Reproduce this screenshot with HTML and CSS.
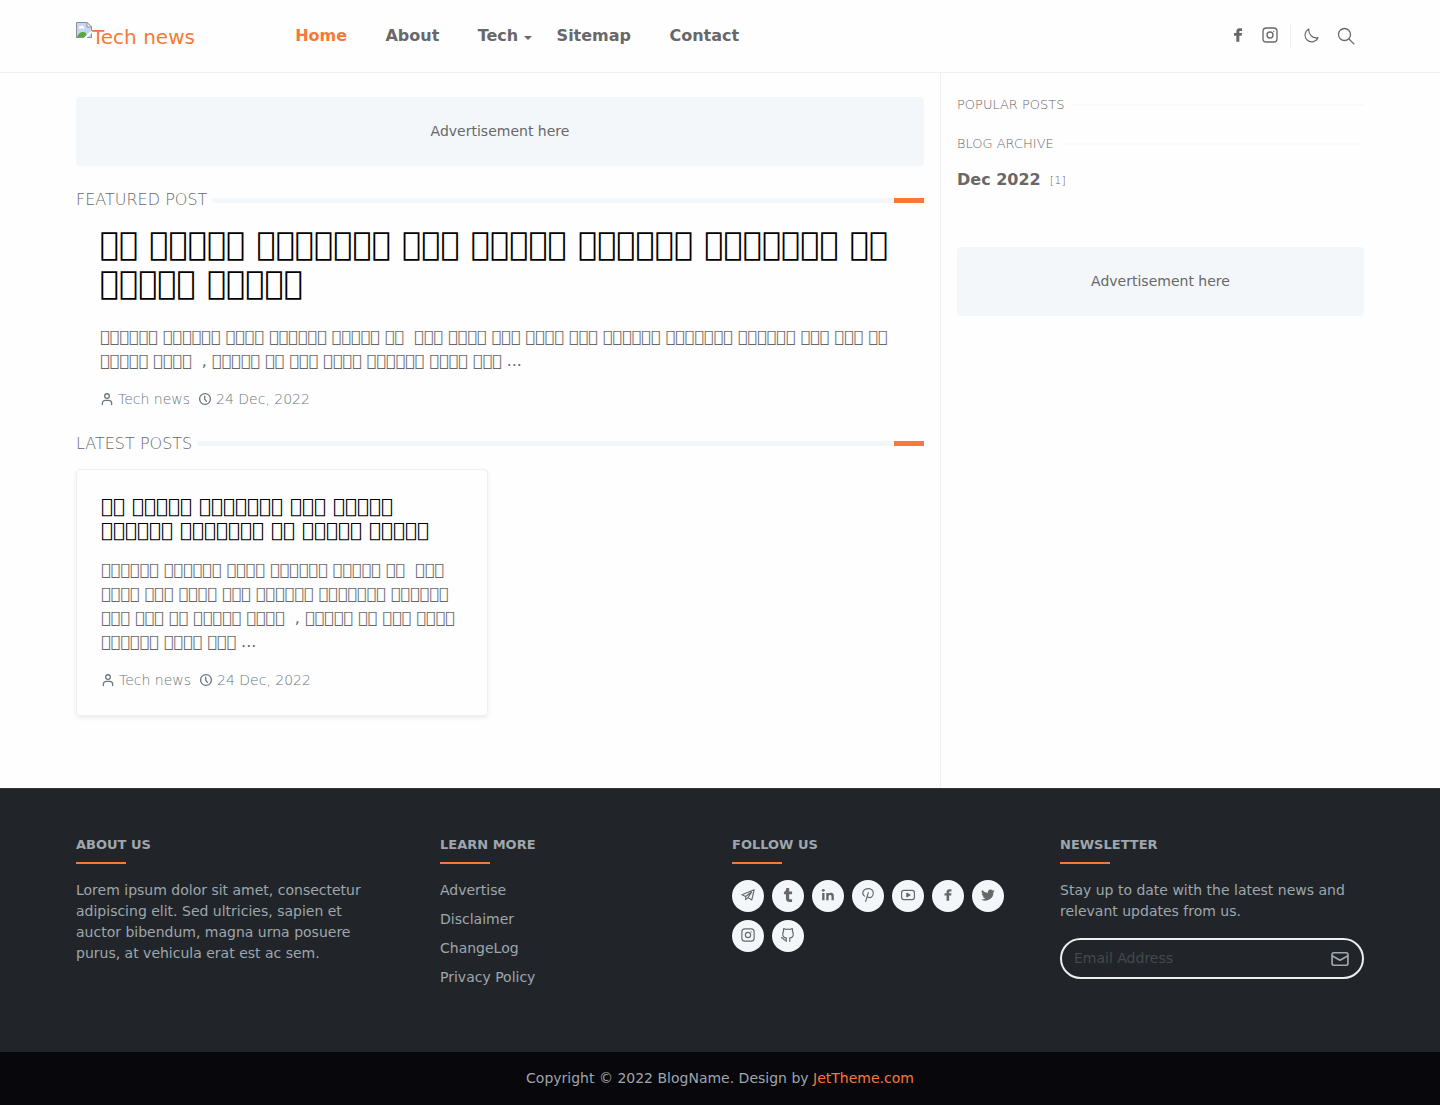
FILE: index.html
```html
<!DOCTYPE html>
<html lang="en">
<head>
<meta charset="utf-8">
<title>Tech news</title>
<link rel="stylesheet" href="styles.css">
</head>
<body>
<svg class="sprite" aria-hidden="true">
  <symbol id="user" viewBox="0 0 24 24"><circle cx="12" cy="7" r="4"/><path d="M4 21.500v-2a5 5 0 0 1 5-5h6a5 5 0 0 1 5 5v2"/></symbol>
  <symbol id="clock" viewBox="0 0 24 24"><circle cx="12" cy="12" r="9.300"/><path d="M11.500 7v5.500l3 3.500"/></symbol>
  <symbol id="instagram" viewBox="0 0 24 24"><rect x="1.500" y="1.500" width="21" height="21" rx="5"/><circle cx="12" cy="12" r="4.500"/><path d="M17.500 6.500h.01"/></symbol>
  <symbol id="facebook" viewBox="0 0 24 24"><path d="M9.500 22v-9H6V9h3.500V7c0-3.200 1.700-5 4.700-5H18v4h-2.400c-1.200 0-1.600.5-1.600 1.500V9h4l-.6 4H14v9z"/></symbol>
</svg>

<header class="header">
  <div class="container header-row">
    <a class="logo">
      <svg class="logo-img" viewBox="0 0 16 16"><path d="M.5 15.500V.5h10.500l4.500 4.500v10.500z" fill="#c6d5f5"/><path d="M3 6.500c-1-2 1-2.500 1.500-2 .5-1.500 3-1.500 3 .5 1.500 0 1.500 1.500.5 1.500z" fill="#fff"/><path d="M1 15.500c1-5 6-7 9-4.500l1 4.500z" fill="#55ab38"/><path d="M.5 16V.5H11l4.500 4.500v11M.5 15.500H15" fill="none" stroke="#8f8f8f"/><path d="M11 .5V5h4.500z" fill="#fff" stroke="#8f8f8f"/><path d="M8.500 16.500L16.500 9" stroke="#fff" stroke-width="2"/></svg><span>Tech news</span>
    </a>
    <nav class="nav">
      <a class="active">Home</a><a>About</a><a class="dropdown">Tech</a><a>Sitemap</a><a>Contact</a>
    </nav>
    <div class="tools">
      <svg class="solid tool-fb"><use href="#facebook"/></svg>
      <svg class="line tool-ig"><use href="#instagram"/></svg>
      <span class="divider"></span>
      <svg class="line tool-moon" viewBox="0 0 16 16"><path d="M5.300 1A7.200 7.200 0 1 0 15 10.200 7.900 7.900 0 0 1 5.300 1z"/></svg>
      <svg class="line tool-search" viewBox="0 0 24 24"><circle cx="10" cy="10" r="8"/><path d="M16 16l6.500 6.500"/></svg>
    </div>
  </div>
</header>

<div class="container page">
  <main class="main">
    <div class="ad">Advertisement here</div>
    <h2 class="section-title">Featured Post</h2>
    <article class="featured">
      <h3>&#xE900;&#xE900; &#xE900;&#xE900;&#xE900;&#xE900;&#xE900; &#xE900;&#xE900;&#xE900;&#xE900;&#xE900;&#xE900;&#xE900; &#xE900;&#xE900;&#xE900; &#xE900;&#xE900;&#xE900;&#xE900;&#xE900; &#xE900;&#xE900;&#xE900;&#xE900;&#xE900;&#xE900; &#xE900;&#xE900;&#xE900;&#xE900;&#xE900;&#xE900;&#xE900; &#xE900;&#xE900; &#xE900;&#xE900;&#xE900;&#xE900;&#xE900; &#xE900;&#xE900;&#xE900;&#xE900;&#xE900;</h3>
      <p>&#xE900;&#xE900;&#xE900;&#xE900;&#xE900;&#xE900; &#xE900;&#xE900;&#xE900;&#xE900;&#xE900;&#xE900; &#xE900;&#xE900;&#xE900;&#xE900; &#xE900;&#xE900;&#xE900;&#xE900;&#xE900;&#xE900; &#xE900;&#xE900;&#xE900;&#xE900;&#xE900; &#xE900;&#xE900;&nbsp; &#xE900;&#xE900;&#xE900; &#xE900;&#xE900;&#xE900;&#xE900; &#xE900;&#xE900;&#xE900; &#xE900;&#xE900;&#xE900;&#xE900; &#xE900;&#xE900;&#xE900; &#xE900;&#xE900;&#xE900;&#xE900;&#xE900;&#xE900; &#xE900;&#xE900;&#xE900;&#xE900;&#xE900;&#xE900;&#xE900; &#xE900;&#xE900;&#xE900;&#xE900;&#xE900;&#xE900; &#xE900;&#xE900;&#xE900; &#xE900;&#xE900;&#xE900; &#xE900;&#xE900; &#xE900;&#xE900;&#xE900;&#xE900;&#xE900; &#xE900;&#xE900;&#xE900;&#xE900;&nbsp; , &#xE900;&#xE900;&#xE900;&#xE900;&#xE900; &#xE900;&#xE900; &#xE900;&#xE900;&#xE900; &#xE900;&#xE900;&#xE900;&#xE900; &#xE900;&#xE900;&#xE900;&#xE900;&#xE900;&#xE900; &#xE900;&#xE900;&#xE900;&#xE900; &#xE900;&#xE900;&#xE900; ...</p>
      <div class="meta"><svg class="line"><use href="#user"/></svg><span>Tech news</span><svg class="line"><use href="#clock"/></svg><span>24 Dec, 2022</span></div>
    </article>
    <h2 class="section-title">Latest Posts</h2>
    <article class="card">
      <h3>&#xE900;&#xE900; &#xE900;&#xE900;&#xE900;&#xE900;&#xE900; &#xE900;&#xE900;&#xE900;&#xE900;&#xE900;&#xE900;&#xE900; &#xE900;&#xE900;&#xE900; &#xE900;&#xE900;&#xE900;&#xE900;&#xE900; &#xE900;&#xE900;&#xE900;&#xE900;&#xE900;&#xE900; &#xE900;&#xE900;&#xE900;&#xE900;&#xE900;&#xE900;&#xE900; &#xE900;&#xE900; &#xE900;&#xE900;&#xE900;&#xE900;&#xE900; &#xE900;&#xE900;&#xE900;&#xE900;&#xE900;</h3>
      <p>&#xE900;&#xE900;&#xE900;&#xE900;&#xE900;&#xE900; &#xE900;&#xE900;&#xE900;&#xE900;&#xE900;&#xE900; &#xE900;&#xE900;&#xE900;&#xE900; &#xE900;&#xE900;&#xE900;&#xE900;&#xE900;&#xE900; &#xE900;&#xE900;&#xE900;&#xE900;&#xE900; &#xE900;&#xE900;&nbsp; &#xE900;&#xE900;&#xE900; &#xE900;&#xE900;&#xE900;&#xE900; &#xE900;&#xE900;&#xE900; &#xE900;&#xE900;&#xE900;&#xE900; &#xE900;&#xE900;&#xE900; &#xE900;&#xE900;&#xE900;&#xE900;&#xE900;&#xE900; &#xE900;&#xE900;&#xE900;&#xE900;&#xE900;&#xE900;&#xE900; &#xE900;&#xE900;&#xE900;&#xE900;&#xE900;&#xE900; &#xE900;&#xE900;&#xE900; &#xE900;&#xE900;&#xE900; &#xE900;&#xE900; &#xE900;&#xE900;&#xE900;&#xE900;&#xE900; &#xE900;&#xE900;&#xE900;&#xE900;&nbsp; , &#xE900;&#xE900;&#xE900;&#xE900;&#xE900; &#xE900;&#xE900; &#xE900;&#xE900;&#xE900; &#xE900;&#xE900;&#xE900;&#xE900; &#xE900;&#xE900;&#xE900;&#xE900;&#xE900;&#xE900; &#xE900;&#xE900;&#xE900;&#xE900; &#xE900;&#xE900;&#xE900; ...</p>
      <div class="meta"><svg class="line"><use href="#user"/></svg><span>Tech news</span><svg class="line"><use href="#clock"/></svg><span>24 Dec, 2022</span></div>
    </article>
  </main>
  <aside class="sidebar">
    <h2 class="side-title">Popular Posts</h2>
    <h2 class="side-title">Blog Archive</h2>
    <div class="archive"><b>Dec 2022</b><span>[1]</span></div>
    <div class="ad">Advertisement here</div>
  </aside>
</div>

<footer class="footer">
  <div class="container footer-row">
    <section class="about">
      <h2>About Us</h2>
      <p>Lorem ipsum dolor sit amet, consectetur adipiscing elit. Sed ultricies, sapien et auctor bibendum, magna urna posuere purus, at vehicula erat est ac sem.</p>
    </section>
    <section class="learn">
      <h2>Learn More</h2>
      <ul><li>Advertise</li><li>Disclaimer</li><li>ChangeLog</li><li>Privacy Policy</li></ul>
    </section>
    <section class="follow">
      <h2>Follow Us</h2>
      <div class="social">
        <a><svg class="line" viewBox="0 0 24 24"><path d="M22.500 3L1.500 11.500l6.500 3V20l4-3.500 6.500 4zM8 14.500L18 7l-6 9.500"/></svg></a>
        <a><svg class="solid" viewBox="0 0 24 24"><path d="M9 0h5v6h5v4.500h-5V17c0 1.800.8 2.300 2.300 2.300H19V24h-4.500C10.500 24 8.500 21.500 8.500 18v-7.500H5V6.800C8 6 9 3.500 9 0z"/></svg></a>
        <a><svg class="solid" viewBox="0 0 24 24"><circle cx="4" cy="4" r="2.400"/><path d="M2 8.500h4V21H2zM9 8.500h4V10c.9-1.200 2.200-1.800 4-1.800 3.300 0 5 2 5 5.600V21h-4v-6c0-1.900-.8-2.800-2.300-2.800-1.700 0-2.700 1-2.700 3V21H9z"/></svg></a>
        <a><svg class="line" viewBox="0 0 24 24"><path d="M8 23l4.500-15M6 14C3.500 12 2.500 9 3.500 6.500 5 2.500 9 1 12.500 1c4.500 0 8.500 3 8.500 7.500 0 4.500-3 8-6.500 8-2 0-3.500-1-4-2.500"/></svg></a>
        <a><svg class="line" viewBox="0 0 24 24"><rect x="1" y="4" width="22" height="16" rx="4"/><path d="M10 9l5.500 3-5.500 3z" fill="currentColor"/></svg></a>
        <a><svg class="solid"><use href="#facebook"/></svg></a>
        <a><svg class="solid" viewBox="0 0 24 24"><path d="M23.600 4.900a9 9 0 0 1-2.700.8 4.800 4.800 0 0 0 2.100-2.600 9.500 9.500 0 0 1-3 1.100 4.800 4.800 0 0 0-8.200 4.400A13.600 13.600 0 0 1 1.900 3.600a4.800 4.800 0 0 0 1.500 6.400 4.800 4.800 0 0 1-2.200-.6 4.800 4.800 0 0 0 3.900 4.700 5 5 0 0 1-2.200.1 4.800 4.800 0 0 0 4.500 3.300A9.700 9.700 0 0 1 .3 19.500a13.600 13.600 0 0 0 20.900-12.100 9.600 9.600 0 0 0 2.400-2.500z"/></svg></a>
        <a><svg class="line"><use href="#instagram"/></svg></a>
        <a><svg class="line" viewBox="0 0 24 24"><path d="M9 23v-6c-4-.5-6-3-6-6.500 0-2 .5-3.500 1.500-4.500C4 4 4 2.500 4.500 1c1.500 0 3 .8 4 1.500 2-.5 5-.5 7 0 1-.7 2.500-1.500 4-1.500.5 1.500.5 3 0 5 1 1 1.500 2.500 1.500 4.500 0 3.500-2 6-6 6.500v6M9 20.500c-3 1-4.500-.5-5.500-2.500L1 16.500"/></svg></a>
      </div>
    </section>
    <section class="news">
      <h2>Newsletter</h2>
      <p>Stay up to date with the latest news and relevant updates from us.</p>
      <div class="field"><span>Email Address</span><svg class="line" viewBox="0 0 24 24"><rect x="2.500" y="4.500" width="19" height="15" rx="2"/><path d="M2.500 8l9.500 5.500L21.500 8"/></svg></div>
    </section>
  </div>
</footer>
<div class="copyright"><p>Copyright © 2022 BlogName. Design by <a>JetTheme.com</a></p></div>
</body>
</html>
```
FILE: styles.css
```css
* { box-sizing: border-box; }
body {
  margin: 0;
  font: 16px/24px "DejaVu Sans", sans-serif;
  color: #686868;
  background: #fefefe;
}
h2, h3, p, ul { margin: 0; padding: 0; }
ul { list-style: none; }
.sprite { display: none; }
.line { fill: none; stroke: currentColor; stroke-width: 2; stroke-linecap: round; stroke-linejoin: round; }
.solid { fill: currentColor; }
.container { width: 1320px; margin: 0 auto; padding: 0 16px; }

.header { height: 73px; border-bottom: 1px solid #efefef; }
.header-row { display: flex; align-items: center; height: 72px; }
.logo { display: flex; width: 200px; height: 30px; margin-top: 2px; color: #f67938; font-size: 20px; line-height: 30px; }
.logo-img { width: 16px; height: 16px; }
.nav { display: flex; font-weight: 700; }
.nav a { position: relative; padding: 0 19.200px; }
.nav .active { color: #f67938; }
.dropdown::after {
  content: "";
  position: absolute;
  right: 5px;
  top: 12px;
  border: 4px solid transparent;
  border-top-color: currentColor;
  border-bottom: 0;
}
.tools { display: flex; align-items: center; margin-left: auto; height: 24px; }
.tool-fb { width: 16px; height: 16px; margin: -2px 16px 0 0; }
.tool-ig { width: 16px; height: 16px; margin: -2px 12px 0 0; }
.divider { width: 1px; height: 24px; background: #efefef; margin-right: 13px; }
.tool-moon { width: 15px; height: 15px; stroke-width: 1.200; margin: -1px 18px 0 0; }
.tool-search { width: 18px; height: 18px; stroke-width: 1.700; margin-right: 9px; }

.page { display: flex; height: 715px; }
.main { width: 865px; padding: 24px 16px 0 0; border-right: 1px solid #efefef; }
.sidebar { flex: 1; padding: 24px 0 0 16px; }
.ad { height: 69px; padding: 24px; border-radius: 4px; background: #f3f7fa; font-size: 14px; line-height: 21px; text-align: center; }
.section-title {
  display: flex;
  align-items: center;
  margin: 24px 0 16px;
  font-size: 16px;
  line-height: 19.200px;
  font-weight: 300;
  text-transform: uppercase;
}
.section-title::before { content: ""; order: 1; flex: 1; height: 5px; margin: 1px 0 0 5px; background: #f3f7fa; }
.section-title::after { content: ""; order: 2; width: 30px; height: 5px; margin-top: 1px; background: #f67938; }
.featured { padding: 0 24px 1.800px; }
.featured h3 { color: #000; font-size: 32px; line-height: 38.400px; }
.featured p { margin: 23px 0 17px; }
.meta { display: flex; align-items: center; height: 18px; font-size: 14px; line-height: 18px; font-weight: 300; color: #6c757d; }
.meta svg { width: 14px; height: 14px; margin-right: 4px; stroke-width: 2.200; }
.meta span { margin-right: 8px; }
.card { width: 412px; height: 247px; padding: 24px; border: 1px solid #efefef; border-radius: 4px; box-shadow: 0 2px 4px rgba(0,0,0,.075); }
.card h3 { color: #000; font-size: 20px; line-height: 24px; }
.card p { margin: 16px 0 17px; }
.side-title { display: flex; align-items: center; margin-bottom: 24px; font-size: 13px; line-height: 15px; font-weight: 300; text-transform: uppercase; }
.side-title::after { content: ""; flex: 1; height: 2px; margin-left: 6px; background: #fafafa; }
.archive { display: flex; align-items: center; height: 24px; margin: -7px 0 55px; }
.archive span { margin-left: 9px; font-size: 11.200px; font-weight: 300; letter-spacing: .1px; padding-top: 1px; }

.footer { height: 264px; padding-top: 48px; border-top: 1px solid #32363a; background: #212529; color: #9fa6ad; font-size: 14px; line-height: 21px; }
.footer-row { display: flex; }
.footer h2 { font-size: 13px; line-height: 16px; text-transform: uppercase; margin-bottom: 16px; }
.footer h2::after { content: ""; display: block; width: 50px; height: 2px; margin-top: 9px; background: #f67938; }
.about { width: 364px; padding-right: 70px; }
.learn { width: 292px; }
.learn li { margin-bottom: 8px; }
.follow { width: 328px; }
.social { display: flex; flex-wrap: wrap; gap: 8px; width: 280px; }
.social a { display: flex; justify-content: center; width: 32px; height: 32px; padding-top: 8px; border-radius: 50%; background: #f3f7fa; color: #686868; }
.social svg { width: 14px; height: 14px; }
.news { width: 304px; }
.field { display: flex; align-items: center; justify-content: space-between; height: 41px; margin-top: 16px; padding: 0 12px; border: 2px solid #efefef; border-radius: 21px; color: #9fa6ad; }
.field span { color: #45494d; }
.field svg { width: 20px; height: 20px; }
.copyright { height: 53px; padding-top: 16px; background: #07070c; color: #9fa6ad; font-size: 14px; line-height: 21px; text-align: center; }
.copyright a { color: #f67938; }
```
